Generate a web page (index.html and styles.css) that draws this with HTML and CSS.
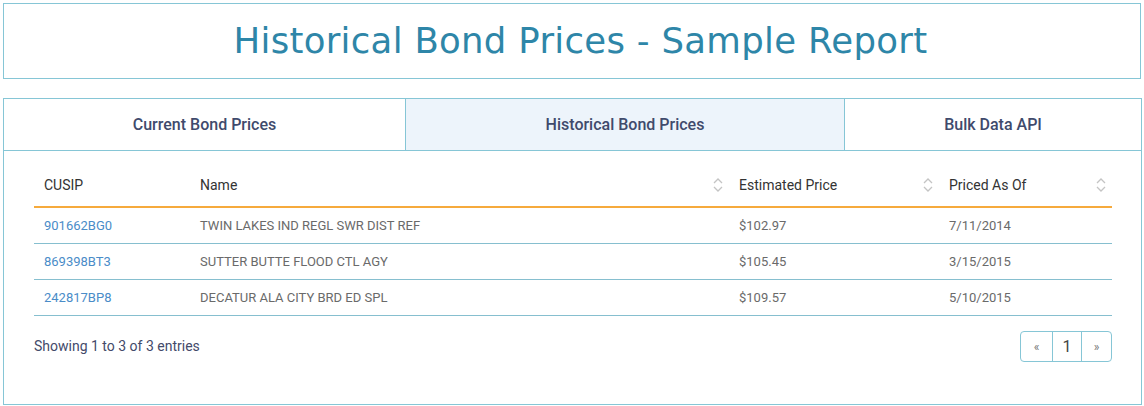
FILE: index.html
```html
<!DOCTYPE html>
<html>
<head>
<meta charset="utf-8">
<link rel="stylesheet" href="styles.css">
</head>
<body>
<div class="page">
  <header class="title-box">
    <h1 class="title">Historical Bond Prices - Sample Report</h1>
  </header>
  <section class="panel">
    <nav class="tabs">
      <div class="tab tab-1">Current Bond Prices</div>
      <div class="tab tab-2 active">Historical Bond Prices</div>
      <div class="tab tab-3">Bulk Data API</div>
    </nav>
    <div class="panel-body">
      <table class="data">
        <thead>
          <tr>
            <th class="col-cusip">CUSIP</th>
            <th class="col-name sortable">Name</th>
            <th class="col-price sortable">Estimated Price</th>
            <th class="col-date sortable">Priced As Of</th>
          </tr>
        </thead>
        <tbody>
          <tr>
            <td><a class="link" href="#">901662BG0</a></td>
            <td>TWIN LAKES IND REGL SWR DIST REF</td>
            <td>$102.97</td>
            <td>7/11/2014</td>
          </tr>
          <tr>
            <td><a class="link" href="#">869398BT3</a></td>
            <td>SUTTER BUTTE FLOOD CTL AGY</td>
            <td>$105.45</td>
            <td>3/15/2015</td>
          </tr>
          <tr>
            <td><a class="link" href="#">242817BP8</a></td>
            <td>DECATUR ALA CITY BRD ED SPL</td>
            <td>$109.57</td>
            <td>5/10/2015</td>
          </tr>
        </tbody>
      </table>
      <div class="footer">
        <div class="info">Showing 1 to 3 of 3 entries</div>
        <div class="pager">
          <span class="pg pg-prev">«</span>
          <span class="pg pg-num">1</span>
          <span class="pg pg-next">»</span>
        </div>
      </div>
    </div>
  </section>
</div>
</body>
</html>
```

FILE: styles.css
```css
* { box-sizing: border-box; }
html, body { margin: 0; padding: 0; background: #fff; }
body { font-family: Roboto, "Liberation Sans", sans-serif; }

.page { padding: 3px 3px 0 3px; }

.title-box {
  width: 1138px;
  height: 76px;
  border: 1px solid #86c6d6;
  display: flex;
  align-items: center;
  justify-content: center;
  padding-left: 17px;
}
.title {
  margin: 0;
  font-family: "DejaVu Sans", sans-serif;
  font-weight: normal;
  font-size: 35.5px;
  color: #2e86a8;
  letter-spacing: 0.3px;
  padding-bottom: 1px;
}

.panel {
  margin-top: 19px;
  width: 1139px;
  height: 307px;
  border: 1px solid #86c6d6;
}

.tabs {
  display: flex;
  height: 52px;
  border-bottom: 1px solid #86c6d6;
}
.tab {
  display: flex;
  align-items: center;
  justify-content: center;
  font-weight: 500;
  font-size: 16px;
  color: #404a6c;
}
.tab-1 { width: 401px; }
.tab-2 { width: 440px; border-left: 1px solid #86c6d6; border-right: 1px solid #86c6d6; }
.tab-3 { flex: 1; }
.tab.active { background: #edf4fb; }

.panel-body { padding: 11px 29px 0 30px; }

.data {
  width: 1078px;
  border-collapse: collapse;
  table-layout: fixed;
}
.data th {
  text-align: left;
  font-weight: normal;
  font-size: 14px;
  color: #333;
  padding: 13px 10px 11px 10px;
  line-height: 20px;
  border-bottom: 2px solid #f6aa3c;
  position: relative;
}
.col-cusip { width: 156px; }
.col-name { width: 539px; }
.col-price { width: 210px; }
.col-date { width: 173px; }

.sortable::after {
  content: "";
  position: absolute;
  right: 5px;
  top: 15px;
  width: 12px;
  height: 16px;
  background-image: url("data:image/svg+xml;utf8,<svg xmlns='http://www.w3.org/2000/svg' width='12' height='16' viewBox='0 0 12 16'><path d='M2 6 L6 2 L10 6' fill='none' stroke='%23c4c4c4' stroke-width='1.3'/><path d='M2 10 L6 14 L10 10' fill='none' stroke='%23c4c4c4' stroke-width='1.3'/></svg>");
  background-repeat: no-repeat;
}

.data td {
  font-size: 13px;
  color: #6a6a6a;
  padding: 8px 10px;
  line-height: 19px;
  border-bottom: 1px solid #86bfcf;
}
.link { color: #4a8cc8; text-decoration: none; }

.footer {
  display: flex;
  justify-content: space-between;
  align-items: flex-start;
  padding-top: 15px;
}
.info {
  font-size: 14px;
  color: #434a6a;
  padding-top: 7px;
}
.pager {
  display: flex;
  border: 1px solid #86c6d6;
  border-radius: 4px;
  height: 31px;
  overflow: hidden;
}
.pg {
  display: flex;
  align-items: center;
  justify-content: center;
  font-size: 12px;
  color: #777;
  height: 29px;
}
.pg-prev { width: 32px; border-right: 1px solid #86c6d6; }
.pg-num { width: 29px; font-size: 16px; color: #444; border-right: 1px solid #86c6d6; }
.pg-next { width: 29px; }
```
